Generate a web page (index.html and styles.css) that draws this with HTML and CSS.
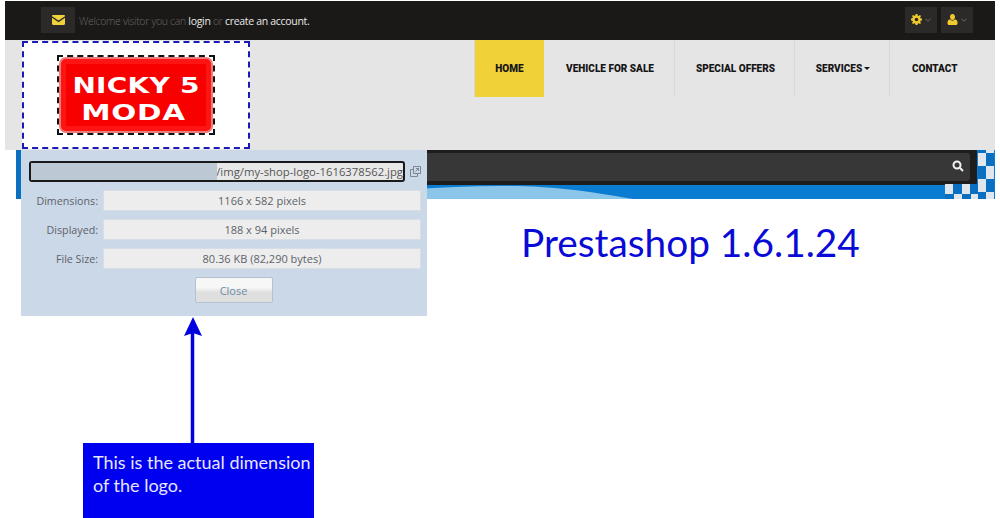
FILE: index.html
```html
<!DOCTYPE html>
<html lang="en">
<head>
<meta charset="utf-8">
<title>Prestashop logo dimensions</title>
<link rel="stylesheet" href="styles.css">
</head>
<body>
<div class="site">
  <div class="topbar">
    <div class="welcome">
      <span class="mailbox">
        <svg class="mail" viewBox="0 0 13 10"><path d="M0 1.2C0 .5.5 0 1.2 0h10.6c.7 0 1.2.5 1.2 1.2L6.500 5.600z"/><path d="M0 2.800V8.800C0 9.500.5 10 1.200 10h10.600c.7 0 1.200-.5 1.200-1.200V2.800L6.500 7.200z"/></svg>
      </span>
      <span class="welcome-text">Welcome visitor you can <a class="toplink">login</a> or <a class="toplink">create an account.</a></span>
    </div>
    <div class="tools">
      <span class="tool">
        <svg class="tool-icon" viewBox="0 0 12 12"><path fill-rule="evenodd" d="M5 0h2l.3 1.600 1.100.5L9.800 1.200l1.100 1.100-.9 1.400.5 1.100L12 5v2l-1.500.3-.5 1.100.9 1.400-1.100 1.100-1.400-.9-1.100.5L7 12H5l-.3-1.500-1.100-.5-1.400.9-1.100-1.100.9-1.400-.5-1.100L0 7V5l1.500-.3.500-1.100-.9-1.400 1.100-1.100 1.400.9 1.100-.5zM6 4a2 2 0 1 0 0 4 2 2 0 0 0 0-4z"/></svg>
        <svg class="chev" viewBox="0 0 7 4"><path d="M.5.5 3.500 3.500 6.500.5"/></svg>
      </span>
      <span class="tool">
        <svg class="tool-icon" viewBox="0 0 12 12"><path d="M6 0c1.700 0 2.700 1.300 2.700 3S7.700 6.500 6 6.500 3.300 4.700 3.300 3 4.300 0 6 0z"/><path d="M3.400 5.800C4 6.700 5 7.300 6 7.300s2-.6 2.600-1.500C10.600 6.200 11.500 7.600 11.500 10c0 1.200-.8 2-1.900 2H2.400C1.300 12 .5 11.200.5 10c0-2.400.9-3.800 2.900-4.200z"/></svg>
        <svg class="chev" viewBox="0 0 7 4"><path d="M.5.5 3.500 3.500 6.500.5"/></svg>
      </span>
    </div>
  </div>

  <div class="masthead">
    <div class="logo-outline">
      <div class="logo-frame">
        <div class="logo"><span class="logo-line">NICKY 5</span><span class="logo-line logo-line-wide">MODA</span></div>
      </div>
    </div>
    <nav class="nav">
      <a class="nav-item nav-home">HOME</a>
      <a class="nav-item nav-vehicle">VEHICLE FOR SALE</a>
      <a class="nav-item nav-offers">SPECIAL OFFERS</a>
      <a class="nav-item nav-services">SERVICES<span class="caret"></span></a>
      <a class="nav-item nav-contact">CONTACT</a>
    </nav>
  </div>

  <div class="strip">
    <div class="searchbar">
      <div class="searchfield">
        <svg class="search-icon" viewBox="0 0 12 12"><circle cx="5" cy="5" r="3.500"/><path d="M7.800 7.800 11 11"/></svg>
      </div>
    </div>
    <div class="wave">
      <svg class="wave-art" viewBox="0 0 974 14" preserveAspectRatio="none"><path d="M300 14C360 6 420 1 479 1 530 1 560 5 612 14z"/></svg>
    </div>
    <div class="checks"></div>
    <div class="checks-low"></div>
  </div>

  <h1 class="release">Prestashop 1.6.1.24</h1>
</div>

<div class="dialog">
  <div class="url-row">
    <div class="url-field"><span class="url-mask"></span><span class="url-text">/img/my-shop-logo-1616378562.jpg</span></div>
    <svg class="external" viewBox="0 0 11 11"><path d="M3.500 3.500H.5v7h7v-3M3.500 .5h7v7h-7zM6 2.500h2.500V5M8.500 2.500 5.500 5.500"/></svg>
  </div>
  <div class="info-row"><span class="info-label">Dimensions:</span><span class="info-value">1166 x 582 pixels</span></div>
  <div class="info-row"><span class="info-label">Displayed:</span><span class="info-value">188 x 94 pixels</span></div>
  <div class="info-row"><span class="info-label">File Size:</span><span class="info-value">80.36 KB (82,290 bytes)</span></div>
  <div class="close-row"><button class="close-btn">Close</button></div>
</div>

<svg class="arrow" viewBox="0 0 20 127"><path class="arrow-head" d="M10 0 19 19 10 16 1 19z"/><path class="arrow-shaft" d="M9.500 15V127"/></svg>
<div class="callout">This is the actual dimension of the logo.</div>
</body>
</html>
```
FILE: styles.css
```css
* { box-sizing: border-box; }
html, body { margin: 0; padding: 0; background: #fff; }
body { position: relative; width: 1000px; height: 518px; overflow: hidden; font-family: "Lato", "Liberation Sans", sans-serif; }

.site { width: 990px; margin: 0 0 0 5px; padding-top: 1px; }

.topbar { height: 39px; background: #1b1917; display: flex; justify-content: space-between; align-items: center; padding: 0 22px 0 36px; }
.welcome { display: flex; align-items: center; gap: 4px; }
.mailbox { width: 34px; height: 26px; background: #2c2a28; display: flex; align-items: center; justify-content: center; margin-top: -2px; }
.mail { width: 13px; height: 10px; fill: #efd23c; }
.welcome-text { font-family: "Open Sans", sans-serif; font-size: 10.500px; font-weight: 300; letter-spacing: -.31px; color: #6a6866; }
.toplink { color: #e8e8e8; font-weight: 400; }
.tools { display: flex; gap: 4px; }
.tool { width: 32px; height: 26px; background: #2c2a28; display: flex; align-items: center; justify-content: center; gap: 3px; margin-top: -2px; }
.tool-icon { width: 11px; height: 11px; fill: #efc92e; }
.chev { width: 6px; height: 4px; fill: none; stroke: #77736d; stroke-width: 1; }

.masthead { height: 110px; background: #e5e5e5; display: flex; position: relative; }
.logo-outline { position: absolute; left: 17px; top: 1px; width: 228px; height: 108px; background: #fff; border: 2px dashed #1a1ab8; display: flex; align-items: center; justify-content: center; }
.logo-frame { width: 158px; height: 80px; border: 2px dashed #111; background: #fff; margin-top: -1px; }
.logo { width: 100%; height: 100%; background: #f80000; border: 2px solid #ec7c7c; border-radius: 7px; box-shadow: inset 0 0 0 5px #ff1414; color: #fff; font-family: "DejaVu Sans", sans-serif; font-weight: 700; font-size: 22px; line-height: 27px; text-align: center; padding-top: 13px; display: flex; flex-direction: column; align-items: center; }
.logo-line { display: block; transform: scaleX(1.27); letter-spacing: .2px; }
.logo-line-wide { transform: translateX(-2.500px) scaleX(1.34); letter-spacing: .5px; }

.nav { margin-left: 470px; display: flex; height: 57px; font-family: "Roboto", sans-serif; font-weight: 900; font-size: 10px; color: #161616; }
.nav-item { display: flex; align-items: center; justify-content: center; border-right: 1px solid #d8d8d8; }
.nav-home { width: 69px; background: #f0d137; border-right: 0; box-shadow: -1px 0 0 #d8d8d8; }
.nav-vehicle { width: 131px; padding-left: 2px; }
.nav-offers { width: 120px; padding-left: 2px; }
.nav-services { width: 95px; padding-left: 2px; }
.nav-contact { width: 110px; border-right: 0; justify-content: flex-start; padding-left: 22px; }
.caret { width: 0; height: 0; border: 3px solid transparent; border-top-color: #161616; border-bottom: 0; margin-left: 2px; }

.strip { position: relative; height: 49px; margin-left: 11px; border-left: 5px solid #0a6fc0; background: #0a7dd2; }
.searchbar { height: 35px; background: linear-gradient(to right, #1e1c1c 956px, transparent 0); padding: 3px 25px 4px 0; }
.searchfield { height: 28px; background: #373737; border-radius: 0 3px 3px 0; display: flex; align-items: center; justify-content: flex-end; padding: 0 6px 2px 0; }
.search-icon { width: 12px; height: 12px; fill: none; stroke: #f2f2f2; stroke-width: 2; }
.wave { height: 14px; }
.wave-art { display: block; width: 100%; height: 14px; fill: #8cc5ea; }
.checks { position: absolute; right: 1px; top: 0; width: 16px; height: 49px; background-color: #dfe6ee; background-image: conic-gradient(#0a6fc0 25%, transparent 0 50%, #0a6fc0 0 75%, transparent 0); background-size: 16px 26px; background-position: 0 3px; }
.checks-low { position: absolute; right: 17px; bottom: 0; width: 33px; height: 15px; background-color: #dfe6ee; background-image: conic-gradient(#0a6fc0 25%, transparent 0 50%, #0a6fc0 0 75%, transparent 0); background-size: 17px 20px; }

.release { margin: 21px 0 0 516px; font-family: "Lato", sans-serif; font-weight: 400; font-size: 38.800px; line-height: 44px; color: #0a0ad6; }

.dialog { position: absolute; left: 21px; top: 150px; width: 406px; height: 166px; background: #cbd8e8; padding: 11px 6px 0 8px; font-family: "Open Sans", sans-serif; font-size: 11px; color: #5e6268; }
.url-row { display: flex; align-items: center; gap: 5px; height: 21px; margin-bottom: 8px; }
.url-field { flex: 0 0 376px; height: 21px; border: 2px solid #1a1a1a; border-radius: 3px; background: #e8e8e8; display: flex; align-items: center; justify-content: flex-end; position: relative; color: #555; }
.url-mask { position: absolute; left: 0; top: 0; bottom: 0; width: 186px; background: #bcc8d4; }
.url-text { font-size: 11.300px; }
.external { width: 11px; height: 11px; fill: none; stroke: #7d8793; stroke-width: 1; }
.info-row { display: flex; align-items: center; gap: 5px; height: 21px; margin-bottom: 8px; }
.info-label { width: 69px; text-align: right; flex: none; font-size: 10.700px; }
.info-value { width: 318px; height: 21px; background: #ededed; border: 1px solid #d8dee6; display: flex; align-items: center; justify-content: center; }
.close-row { display: flex; justify-content: center; margin-top: 2px; padding-left: 17px; }
.close-btn { width: 78px; height: 26px; border: 1px solid #b3c2d2; border-radius: 2px; background: linear-gradient(#f7f7f7 0 40%, #dfdfdf 60%); color: #6b8ca6; font: 11px "Open Sans", sans-serif; padding: 0; }

.arrow { position: absolute; left: 183px; top: 317px; width: 20px; height: 127px; }
.arrow-head { fill: #0000e0; }
.arrow-shaft { stroke: #0000e0; stroke-width: 3.500; fill: none; }

.callout { position: absolute; left: 83px; top: 443px; width: 231px; height: 75px; background: #0000f0; color: #e6e6ff; font-family: "Lato", sans-serif; font-size: 18px; line-height: 23px; padding: 8px 0 0 10px; }
```
